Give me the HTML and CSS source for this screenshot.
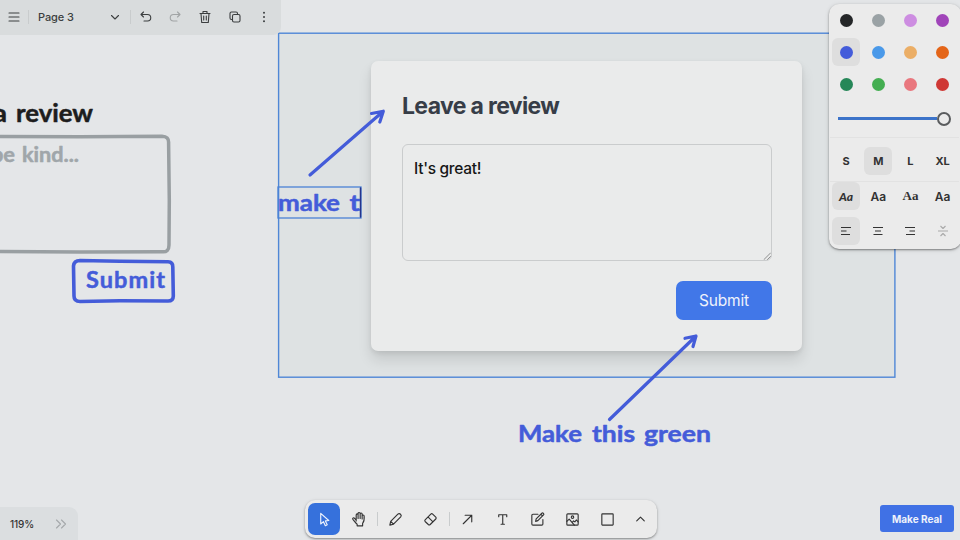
FILE: index.html
```html
<!DOCTYPE html>
<html lang="en">
<head>
<meta charset="utf-8">
<title>Page 3</title>
<link rel="stylesheet" href="styles.css">
</head>
<body>
<main class="canvas">
  <section class="frame">
    <form class="card">
      <h1>Leave a review</h1>
      <div class="field">It's great!
        <svg class="grip" viewBox="0 0 8 8"><path d="M1 7.5 7.5 1M4.5 7.5l3-3"/></svg>
      </div>
      <button type="button" class="submit">Submit</button>
    </form>
  </section>

  <svg class="drawing" viewBox="0 0 960 540">
    <rect class="frame-line" x="278.600" y="33.200" width="616.300" height="344"/>
    <g class="hand">
      <text class="black" y="122" font-size="24"><tspan x="-7" textLength="14" lengthAdjust="spacingAndGlyphs">a</tspan> <tspan x="16" textLength="77" lengthAdjust="spacingAndGlyphs">review</tspan></text>
      <path class="gray-line" d="M-8 136.5 80 136.8 162 136.3Q169 136.5 168.6 143L169.3 200 169 245Q169 252.500 162 251.700L80 252-8 251.500"/>
      <text class="gray" y="162" font-size="20"><tspan x="-9" textLength="24" lengthAdjust="spacingAndGlyphs">be</tspan> <tspan x="22" textLength="57" lengthAdjust="spacingAndGlyphs">kind...</tspan></text>
      <path class="blue-line" d="M80 260.500 120 261.300 168 261.800Q173 262 172.800 267L173.300 296Q173.300 301 168 301L120 300.800 80 301.500Q74 301.500 74 296L73.500 266Q74 260.500 80 260.500Z"/>
      <text class="blue" x="86" y="288" font-size="23.500" textLength="79" lengthAdjust="spacing">Submit</text>
      <rect class="edit-box" x="278" y="187" width="83" height="31"/>
      <text class="blue" y="211" font-size="23"><tspan x="278" textLength="62" lengthAdjust="spacingAndGlyphs">make</tspan> <tspan x="349.500" textLength="10.500" lengthAdjust="spacingAndGlyphs">t</tspan></text>
      <path class="caret" d="M360.500 188v29"/>
      <text class="blue" y="441.500" font-size="23"><tspan x="518" textLength="64" lengthAdjust="spacingAndGlyphs">Make</tspan> <tspan x="592" textLength="43" lengthAdjust="spacingAndGlyphs">this</tspan> <tspan x="644" textLength="67" lengthAdjust="spacingAndGlyphs">green</tspan></text>
      <path class="arrow" d="M310 175 383 111.500M371.500 113.500 383.300 111.200 379.800 122"/>
      <path class="arrow" d="M609.500 419.500 696 336M685 338.300 696 336 693 346.500"/>
    </g>
  </svg>
</main>

<header class="menu-bar">
  <span class="cell menu"><svg viewBox="0 0 14 14"><path d="M2 3h10M2 7h10M2 11h10"/></svg></span>
  <i class="rule"></i>
  <span class="page-name">Page 3</span>
  <span class="cell chevron"><svg viewBox="0 0 14 14"><path d="m3.500 5.500 3.500 3.500 3.500-3.500"/></svg></span>
  <i class="rule"></i>
  <div class="actions">
    <span class="cell"><svg viewBox="0 0 14 14"><path d="M4.500 2 2 4.500 4.500 7M2 4.500h6.500a3.200 3.200 0 0 1 0 6.500H5"/></svg></span>
    <span class="cell faded"><svg viewBox="0 0 14 14"><path d="M9.500 2 12 4.500 9.500 7M12 4.500H5.500a3.200 3.200 0 0 0 0 6.500H9"/></svg></span>
    <span class="cell"><svg viewBox="0 0 14 14"><path d="M2 3.500h10M3 3.500l.7 9h6.600l.7-9M5 3.500v-2h4v2M5.700 6v4M8.300 6v4"/></svg></span>
    <span class="cell"><svg viewBox="0 0 14 14"><rect x="4.500" y="4.500" width="7.500" height="7.500" rx="1.500"/><path d="M4.500 9.500h-1A1.500 1.500 0 0 1 2 8V3.500A1.500 1.500 0 0 1 3.500 2H8a1.500 1.500 0 0 1 1.500 1.500v1"/></svg></span>
    <span class="cell"><svg class="solid" viewBox="0 0 14 14"><circle cx="7" cy="2.800" r="1"/><circle cx="7" cy="7" r="1"/><circle cx="7" cy="11.200" r="1"/></svg></span>
  </div>
</header>

<aside class="style-panel">
  <div class="grid colors">
    <span><b class="dot c-black"></b></span><span><b class="dot c-grey"></b></span><span><b class="dot c-lilac"></b></span><span><b class="dot c-violet"></b></span>
    <span class="on"><b class="dot c-blue"></b></span><span><b class="dot c-sky"></b></span><span><b class="dot c-yellow"></b></span><span><b class="dot c-orange"></b></span>
    <span><b class="dot c-green"></b></span><span><b class="dot c-lime"></b></span><span><b class="dot c-pink"></b></span><span><b class="dot c-red"></b></span>
  </div>
  <div class="slider"><i class="track"></i><i class="thumb"></i></div>
  <div class="grid sizes"><span>S</span><span class="on">M</span><span>L</span><span>XL</span></div>
  <div class="grid fonts"><span class="on draw">Aa</span><span>Aa</span><span class="serif">Aa</span><span class="mono">Aa</span></div>
  <div class="grid aligns">
    <span class="on"><svg viewBox="0 0 14 14"><path d="M2 3.500h10M2 7h5.500M2 10.500h9"/></svg></span>
    <span><svg viewBox="0 0 14 14"><path d="M2 3.500h10M4 7h6M2.500 10.500h9"/></svg></span>
    <span><svg viewBox="0 0 14 14"><path d="M2 3.500h10M6.500 7H12M3 10.500h9"/></svg></span>
    <span class="faded"><svg viewBox="0 0 14 14"><path d="M2 7h10M4.500 2 7 4.500 9.500 2M4.500 12 7 9.500 9.500 12"/></svg></span>
  </div>
</aside>

<footer class="zoom-bar"><span>119%</span><svg viewBox="0 0 14 14"><path d="m2.500 3 4 4-4 4M7.500 3l4 4-4 4"/></svg></footer>

<nav class="tools">
  <span class="tool active"><svg viewBox="0 0 18 18"><path d="M5 2.500v11.300l2.900-2.500 2 4.200 2-1-2-4 3.600-.4Z"/></svg></span>
  <span class="tool"><svg viewBox="0 0 18 18"><path d="M5.500 10.500V4.200c0-1.500 2-1.500 2 0V8 2.700c0-1.500 2.200-1.500 2.200 0V8 3.300c0-1.500 2.100-1.500 2.100 0v5.200-3.200c0-1.500 2.100-1.400 2.100 0 .3 3.200 0 5.800-1.600 7.700v2.700H6.500V14C4.700 12.600 3.500 10.500 2 8.800c-.8-1.300.9-2.200 1.800-1.100l1.700 2.100"/></svg></span>
  <i class="rule"></i>
  <span class="tool"><svg viewBox="0 0 18 18"><path d="m3 15 .9-4 7.600-7.600c1.800-1.700 4.700.9 3 2.900L6.900 14Zm.9-4 3 3"/></svg></span>
  <span class="tool"><svg viewBox="0 0 18 18"><path d="m3.300 9.300 6-6q1-.9 2 0l3.300 3.200q.9 1 0 2L8.700 14.300q-1 .9-2 0l-3.400-3.200q-.8-.9 0-1.800ZM6.300 6.300l5.300 5.200"/></svg></span>
  <i class="rule"></i>
  <span class="tool"><svg viewBox="0 0 18 18"><path d="M4.500 13.500 13.500 4.500M6.500 4.500h7v7"/></svg></span>
  <span class="tool"><svg viewBox="0 0 18 18"><path d="M5 6V4h8.500v2M9.250 4v10M7.500 14H11"/></svg></span>
  <span class="tool"><svg viewBox="0 0 18 18"><path d="M9.500 3.500H4.200Q3 3.500 3 4.700v9.100Q3 15 4.200 15h9.300q1.200 0 1.200-1.200V9M7 11l.6-2.600 6-6q.8-.7 1.700.1.900.9.100 1.700l-6 6Zm5.500-7.600 1.900 1.900"/></svg></span>
  <span class="tool"><svg viewBox="0 0 18 18"><rect x="3" y="3" width="12" height="12" rx="1"/><circle cx="9" cy="6.500" r="1.300"/><path d="M3 11l2.500-2.500L11 15M8.800 12l1.300-1.500 1.400 1 1.500-2 2 2"/></svg></span>
  <span class="tool"><svg viewBox="0 0 18 18"><rect x="3" y="3" width="12" height="12" rx=".6"/></svg></span>
  <span class="tool more"><svg viewBox="0 0 18 18"><path d="m5 10.500 4-4 4 4"/></svg></span>
</nav>

<button class="make-real" type="button">Make Real</button>
</body>
</html>
```
FILE: styles.css
```css
* { box-sizing: border-box; }

body {
  margin: 0;
  width: 960px;
  height: 540px;
  overflow: hidden;
  position: relative;
  background: #e4e6e8;
  color: #333;
  font-family: Inter, "Liberation Sans", sans-serif;
}

svg {
  display: block;
  fill: none;
  stroke: currentColor;
  stroke-width: 1.1;
  stroke-linecap: round;
  stroke-linejoin: round;
}

button { border: 0; padding: 0; font-family: inherit; color: #eef2fb; }

.canvas { position: absolute; inset: 0; }

.frame {
  position: absolute;
  left: 279px;
  top: 33px;
  width: 616px;
  height: 344px;
  padding: 28px 0 0 92px;
  background: #dee2e3;
}

.card {
  width: 431px;
  height: 290px;
  padding: 30px 30px 30px 31px;
  border-radius: 7px;
  background: #eaebeb;
  box-shadow: 0 9px 14px rgba(0, 0, 0, .11), 0 2px 5px rgba(0, 0, 0, .08);
  display: flex;
  flex-direction: column;
}

h1 {
  margin: 0;
  height: 53px;
  font-size: 23px;
  line-height: 31px;
  font-weight: 700;
  letter-spacing: -.65px;
  color: #373d47;
}

.field {
  position: relative;
  height: 117px;
  padding: 12px 11px;
  border: 1px solid #cacccd;
  border-radius: 6px;
  font-size: 15.500px;
  line-height: 24px;
  letter-spacing: -.3px;
  font-weight: 500;
  color: #161616;
}

.grip {
  position: absolute;
  right: 0;
  bottom: 0;
  width: 8px;
  height: 8px;
  color: #777;
  stroke-width: .8;
}

.submit {
  align-self: flex-end;
  width: 96px;
  height: 39px;
  margin-top: 20px;
  border-radius: 7px;
  background: #4177e8;
  font-size: 15.500px;
  letter-spacing: -.15px;
}

.drawing { position: absolute; inset: 0; width: 960px; height: 540px; }
.hand text { font-family: Lato, "Open Sans", sans-serif; font-weight: 700; stroke-width: .5; }
.black { fill: #1d1d1d; stroke: #1d1d1d; }
.gray { fill: #a0a6aa; stroke: #a0a6aa; }
.blue { fill: #445cd9; stroke: #445cd9; }
.gray-line { stroke: #999fa2; stroke-width: 3.500; }
.blue-line { stroke: #445cd9; stroke-width: 3.600; }
.arrow { stroke: #445cd9; stroke-width: 3.200; }
.frame-line { stroke: #4f87d6; stroke-width: 1.400; stroke-linejoin: miter; }
.edit-box { stroke: #4a82d6; stroke-width: 1.300; stroke-linejoin: miter; }
.caret { stroke: #25348c; stroke-width: 1.500; }

.rule { width: 1px; height: 14px; background: #c9cccd; flex: none; }
.faded { opacity: .35; }

.menu-bar {
  position: absolute;
  left: 0;
  top: 0;
  width: 281px;
  height: 34.500px;
  border-radius: 0 0 8px 0;
  background: #d9dcdd;
  display: flex;
  align-items: center;
  color: #3c3f40;
}
.cell { width: 29.700px; display: flex; justify-content: center; }
.cell svg { width: 14px; height: 14px; }
.cell .solid { fill: currentColor; stroke: none; }
.menu { width: 28px; }
.page-name { width: 71px; padding-left: 9px; font-size: 11px; font-weight: 500; letter-spacing: -.1px; }
.actions { display: flex; }

.style-panel {
  position: absolute;
  left: 829px;
  top: 4px;
  width: 131.500px;
  height: 245px;
  padding: 0 2px 0 1px;
  border-radius: 10px;
  background: #ebebeb;
  box-shadow: 0 1px 2px rgba(0, 0, 0, .4), 0 1px 5px rgba(0, 0, 0, .12);
}
.grid { display: grid; grid-template-columns: repeat(4, 32.200px); justify-items: center; align-items: center; }
.grid > span {
  width: 28px;
  height: 28px;
  border-radius: 6px;
  display: flex;
  align-items: center;
  justify-content: center;
}
.grid > .on { background: #dedede; }
.grid svg { width: 14px; height: 14px; }
.colors { grid-auto-rows: 32px; }
.dot { width: 13px; height: 13px; border-radius: 50%; }
.c-black { background: #242628; }
.c-grey { background: #9aa2a5; }
.c-lilac { background: #cd8de1; }
.c-violet { background: #a044b9; }
.c-blue { background: #445cda; }
.c-sky { background: #4a99e9; }
.c-yellow { background: #ebae66; }
.c-orange { background: #e46518; }
.c-green { background: #268758; }
.c-lime { background: #44ae51; }
.c-pink { background: #e9777e; }
.c-red { background: #cf3835; }

.slider {
  height: 38px;
  padding: 0 8px;
  display: flex;
  align-items: center;
  border-bottom: 1px solid #e2e2e2;
}
.track { flex: 1; height: 2.500px; background: #3c73c9; }
.thumb { width: 14px; height: 14px; border: 2px solid #5a5c5e; border-radius: 50%; background: #ebebeb; }
.sizes { height: 44px; padding-top: 2px; border-bottom: 1px solid #e2e2e2; font-size: 11px; font-weight: 700; }
.fonts { height: 30px; font-size: 12px; font-weight: 600; }
.draw { font-family: Lato, sans-serif; font-weight: 900; font-style: italic; }
.serif { font-family: "Liberation Serif", serif; font-size: 13px; font-weight: 700; }
.mono { font-family: Inter, sans-serif; }
.fonts { margin-top: -1px; }
.aligns { height: 38px; margin-top: 1px; }
.aligns svg { stroke-linecap: butt; }

.zoom-bar {
  position: absolute;
  left: 0;
  bottom: 0;
  width: 78px;
  height: 33px;
  padding: 1px 0 0 10px;
  border-radius: 0 9px 0 0;
  background: #dbdee0;
  display: flex;
  align-items: center;
  gap: 20px;
  font-size: 10px;
  font-weight: 500;
}
.zoom-bar span { letter-spacing: -.15px; }
.zoom-bar svg { width: 14px; height: 14px; color: #a4a8aa; }

.tools {
  position: absolute;
  left: 305px;
  top: 500px;
  width: 352px;
  height: 38px;
  padding-left: 3px;
  border-radius: 10px;
  background: #ebebeb;
  box-shadow: 0 1px 2px rgba(0, 0, 0, .35), 0 1px 4px rgba(0, 0, 0, .1);
  display: flex;
  align-items: center;
}
.tool { width: 35.200px; height: 32px; display: flex; align-items: center; justify-content: center; flex: none; }
.tool svg { width: 17px; height: 17px; stroke-width: 1.200; }
.active { width: 32px; margin-right: 2px; border-radius: 7px; background: #3671dc; color: #eef3fd; }
.more { width: 30px; }

.make-real {
  position: absolute;
  left: 880px;
  top: 505px;
  width: 74px;
  height: 27px;
  border-radius: 3px;
  background: #4071e5;
  font-size: 10px;
  font-weight: 700;
}
```
